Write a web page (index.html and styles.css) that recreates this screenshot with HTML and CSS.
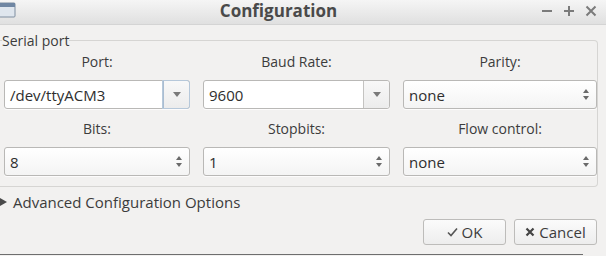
FILE: index.html
```html
<!DOCTYPE html>
<html lang="en">
<head>
    <meta charset="UTF-8">
    <title>Configuration</title>
    <link rel="stylesheet" href="styles.css">
</head>
<body>

    <div class="titlebar">
        <svg class="app-icon" width="16" height="18" viewBox="0 0 16 18">
            <rect x="-3" y="3" width="18" height="14" rx="1" fill="#dfe6ee" stroke="#7f8ea0"/>
            <rect x="-3" y="3" width="18" height="4" fill="#6f86a3"/>
        </svg>
        <div class="title">Configuration</div>
        <div class="controls">
            <svg width="12" height="12" viewBox="0 0 12 12"><path d="M1 6h10" stroke="#7b7b7b" stroke-width="2"/></svg>
            <svg width="12" height="12" viewBox="0 0 12 12"><path d="M1 6h10M6 1v10" stroke="#7b7b7b" stroke-width="2"/></svg>
            <svg width="12" height="12" viewBox="0 0 12 12"><path d="M1.5 1.5l9 9M10.5 1.5l-9 9" stroke="#7b7b7b" stroke-width="2"/></svg>
        </div>
    </div>

    <div class="content">
        <fieldset class="group">
            <legend>Serial port</legend>
            <div class="grid">
                <div class="field">
                    <label>Port:</label>
                    <div class="combo editable focused">
                        <span class="value">/dev/ttyACM3</span>
                        <span class="drop"><span class="tri"></span></span>
                    </div>
                </div>
                <div class="field">
                    <label>Baud Rate:</label>
                    <div class="combo editable">
                        <span class="value">9600</span>
                        <span class="drop"><span class="tri"></span></span>
                    </div>
                </div>
                <div class="field">
                    <label>Parity:</label>
                    <div class="combo">
                        <span class="value">none</span>
                        <span class="spin"><span class="up"></span><span class="down"></span></span>
                    </div>
                </div>
                <div class="field">
                    <label>Bits:</label>
                    <div class="combo">
                        <span class="value">8</span>
                        <span class="spin"><span class="up"></span><span class="down"></span></span>
                    </div>
                </div>
                <div class="field">
                    <label>Stopbits:</label>
                    <div class="combo">
                        <span class="value">1</span>
                        <span class="spin"><span class="up"></span><span class="down"></span></span>
                    </div>
                </div>
                <div class="field">
                    <label>Flow control:</label>
                    <div class="combo">
                        <span class="value">none</span>
                        <span class="spin"><span class="up"></span><span class="down"></span></span>
                    </div>
                </div>
            </div>
        </fieldset>

        <div class="advanced">
            <span class="arrow"></span>
            <span>Advanced Configuration Options</span>
        </div>

        <div class="buttons">
            <button class="btn">
                <svg width="11" height="10" viewBox="0 0 11 10"><path d="M1 5.5l3 3 6-7" fill="none" stroke="#555" stroke-width="1.6"/></svg>
                OK
            </button>
            <button class="btn">
                <svg width="10" height="10" viewBox="0 0 10 10"><path d="M1.5 1.5l7 7M8.5 1.5l-7 7" stroke="#444" stroke-width="2.2"/></svg>
                Cancel
            </button>
        </div>
    </div>

    <div class="bottom-edge"></div>

</body>
</html>
```

FILE: styles.css
```css
body {
    margin: 0;
    width: 606px;
    height: 256px;
    overflow: hidden;
    background: #f2f1f0;
    font-family: "Open Sans", "DejaVu Sans", sans-serif;
    font-size: 14px;
    color: #3c3c3c;
}
.titlebar {
    height: 25px;
    display: flex;
    align-items: center;
    background: linear-gradient(#f5f5f5, #e0e0e0);
    border-bottom: 1px solid #d4d4d4;
    box-sizing: border-box;
}
.app-icon {
    display: block;
    margin-top: -6px;
}
.title {
    flex: 1;
    text-align: center;
    font-weight: bold;
    font-size: 17px;
    line-height: 20px;
    margin-top: -2px;
    color: #4a4a4a;
}
.controls {
    display: flex;
    gap: 10px;
    padding-right: 9px;
    margin-top: -2px;
}
.controls svg {
    display: block;
}
.content {
    padding: 0 9px 0 0;
}
.group {
    margin: 7px 0 0 0;
    padding: 4px 0 10px 4px;
    border: 1px solid #d6d5d3;
    border-left: none;
    border-radius: 0 4px 4px 0;
}
.group legend {
    padding: 0;
    margin-left: -2px;
    line-height: 17px;
    font-size: 14px;
}
.grid {
    display: grid;
    grid-template-columns: 186px 187px 194px;
    column-gap: 13px;
    row-gap: 11px;
}
.field {
    display: flex;
    flex-direction: column;
    align-items: center;
}
.field label {
    line-height: 18px;
    margin-bottom: 9px;
}
.combo {
    align-self: stretch;
    height: 29px;
    box-sizing: border-box;
    display: flex;
    align-items: center;
    border: 1px solid #b9b8b6;
    border-radius: 3px;
    background: linear-gradient(#ffffff, #f4f4f4);
    box-shadow: 0 1px 0 rgba(255, 255, 255, 0.8);
}
.combo .value {
    flex: 1;
    padding-left: 5px;
    font-size: 15px;
    color: #2e2e2e;
}
.combo.editable {
    background: #ffffff;
}
.drop {
    width: 26px;
    height: 100%;
    box-sizing: border-box;
    border-left: 1px solid #c4c3c1;
    background: linear-gradient(#f8f8f8, #ececec);
    border-radius: 0 3px 3px 0;
    display: flex;
    align-items: center;
    justify-content: center;
}
.focused .drop {
    border-left-color: #a9bdd2;
    box-shadow: 0 0 0 1px #b6c8da;
}
.tri {
    width: 0;
    height: 0;
    border-left: 4px solid transparent;
    border-right: 4px solid transparent;
    border-top: 5px solid #7a7a7a;
}
.spin {
    width: 20px;
    display: flex;
    flex-direction: column;
    align-items: center;
    gap: 3px;
}
.spin .up {
    border-left: 3px solid transparent;
    border-right: 3px solid transparent;
    border-bottom: 4px solid #6a6a6a;
}
.spin .down {
    border-left: 3px solid transparent;
    border-right: 3px solid transparent;
    border-top: 4px solid #6a6a6a;
}
.advanced {
    display: flex;
    align-items: center;
    gap: 6px;
    height: 18px;
    margin-top: 6px;
    font-size: 15px;
}
.arrow {
    width: 0;
    height: 0;
    border-top: 4px solid transparent;
    border-bottom: 4px solid transparent;
    border-left: 7px solid #4a4a4a;
}
.buttons {
    display: flex;
    justify-content: flex-end;
    gap: 8px;
    margin-top: 8px;
}
.btn {
    width: 83px;
    height: 26px;
    display: flex;
    align-items: center;
    justify-content: center;
    gap: 4px;
    border: 1px solid #bdbcba;
    border-radius: 3px;
    background: linear-gradient(#fbfbfb, #ededed);
    font-family: "Open Sans", "DejaVu Sans", sans-serif;
    font-size: 15px;
    color: #3c3c3c;
    padding: 0;
}
.bottom-edge {
    margin-top: 9px;
    width: 583px;
    border-top: 1px solid #6e6e6e;
}
```
